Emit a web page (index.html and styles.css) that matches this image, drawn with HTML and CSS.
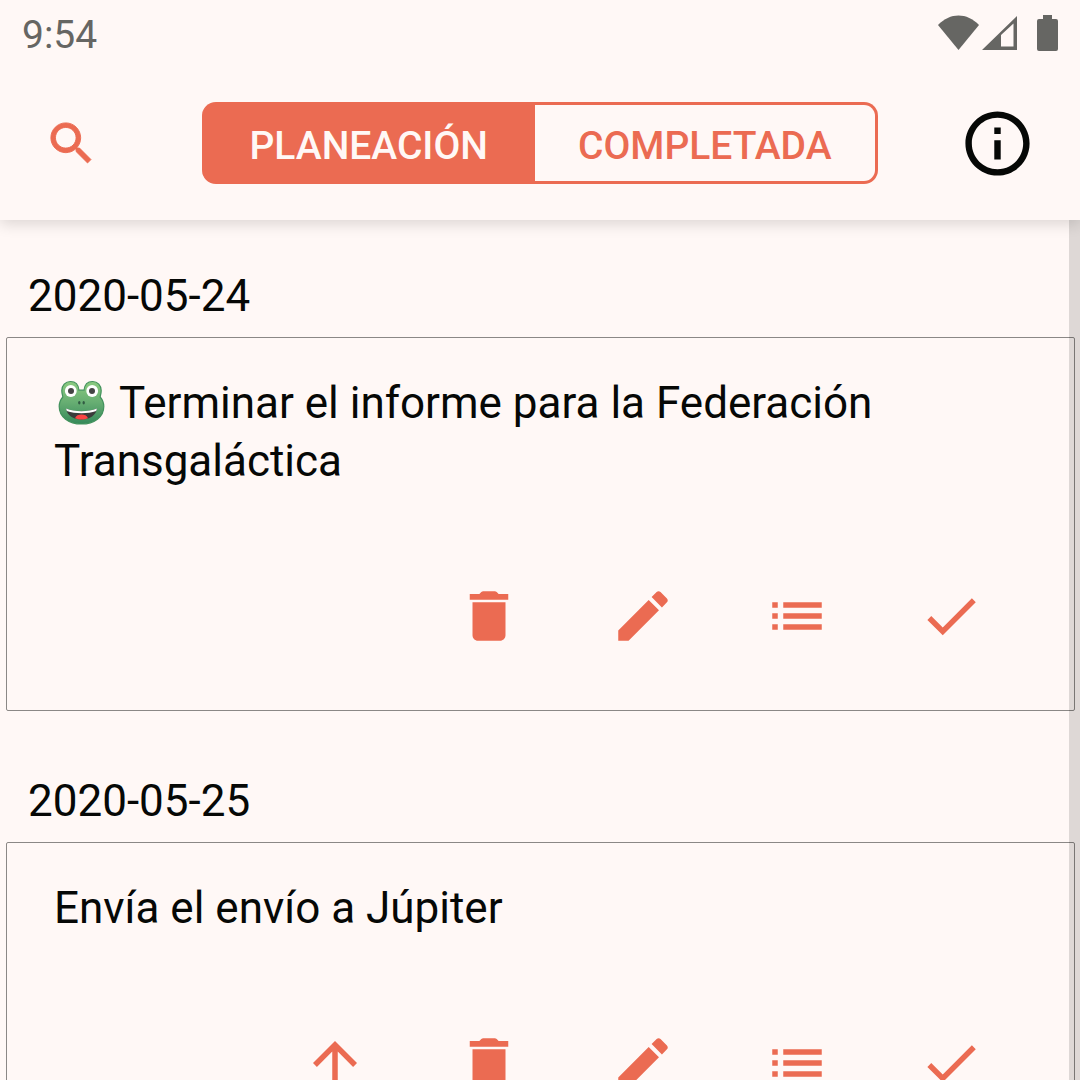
FILE: index.html
```html
<!DOCTYPE html>
<html lang="es">
<head>
<meta charset="utf-8">
<meta name="viewport" content="width=device-width, initial-scale=1">
<title>Planeación</title>
<link rel="stylesheet" href="styles.css">
</head>
<body>
<svg class="sprite" aria-hidden="true">
  <symbol id="trash" viewBox="0 0 24 24"><path d="M6 19c0 1.1.9 2 2 2h8c1.1 0 2-.9 2-2V7H6v12zM19 4h-3.500l-.7-.7c-.2-.2-.45-.3-.7-.3H9.900c-.25 0-.5.1-.7.3l-.7.7H5v2.100h14V4z"/></symbol>
  <symbol id="pencil" viewBox="0 0 24 24"><path d="M3 17.250V21h3.750L17.810 9.940l-3.750-3.750L3 17.250zM20.710 7.040c.39-.39.39-1.020 0-1.410l-2.340-2.340c-.39-.39-1.020-.39-1.410 0l-1.830 1.830 3.750 3.750 1.830-1.830z"/></symbol>
  <symbol id="list" viewBox="0 0 24 24"><path d="M3 13h2v-2H3v2zm0 4h2v-2H3v2zm0-8h2V7H3v2zm4 4h14v-2H7v2zm0 4h14v-2H7v2zM7 7v2h14V7H7z"/></symbol>
  <symbol id="check" viewBox="0 0 24 24"><path d="M9 16.170L4.830 12l-1.420 1.410L9 19 21 7l-1.410-1.410z"/></symbol>
  <symbol id="up" viewBox="0 0 24 24"><path d="M4 12l1.410 1.410L11 7.830V20h2V7.830l5.580 5.590L20 12l-8-8-8 8z"/></symbol>
</svg>
<div class="app">
  <header class="header">
    <div class="status">
      <time class="clock">9:54</time>
      <div class="indicators">
        <svg class="wifi" viewBox="0 0 41 36" aria-hidden="true"><path d="M0 10C12-2.800 29-2.800 41 10L20.500 35z"/></svg>
        <svg class="signal" viewBox="0 0 35 36" aria-hidden="true"><path fill-rule="evenodd" d="M0 35L35 1v34zM19 20v11.500h12.500V8.500z"/></svg>
        <svg class="battery" viewBox="0 0 21 36" aria-hidden="true"><path d="M6 0h9v4h4q2 0 2 2v28q0 2-2 2H2q-2 0-2-2V6q0-2 2-2h4z"/></svg>
      </div>
    </div>
    <div class="toolbar">
      <button class="tool search" type="button" aria-label="Buscar"><svg viewBox="0 0 24 24"><path d="M15.500 14h-.79l-.28-.27C15.410 12.590 16 11.110 16 9.500 16 5.910 13.090 3 9.500 3S3 5.910 3 9.500 5.910 16 9.500 16c1.610 0 3.090-.59 4.230-1.570l.27.28v.79l5 4.990L20.490 19l-4.990-5zm-6 0C7.010 14 5 11.990 5 9.500S7.010 5 9.500 5 14 7.010 14 9.500 11.990 14 9.500 14z" stroke="currentColor" stroke-width=".4"/></svg></button>
      <div class="segments">
        <button class="segment active" type="button" aria-pressed="true">PLANEACIÓN</button>
        <button class="segment" type="button" aria-pressed="false">COMPLETADA</button>
      </div>
      <button class="tool info" type="button" aria-label="Información"><svg viewBox="0 0 24 24"><path d="M11 17h2v-6h-2v6zm1-15C6.480 2 2 6.480 2 12s4.480 10 10 10 10-4.480 10-10S17.520 2 12 2zm0 18c-4.410 0-8-3.590-8-8s3.590-8 8-8 8 3.590 8 8-3.590 8-8 8zM11 9h2V7h-2v2z"/></svg></button>
    </div>
  </header>
  <div class="content">
    <main class="list">
      <section class="day">
        <h2 class="date">2020-05-24</h2>
        <article class="card">
          <p class="title"><svg class="frog" viewBox="0 0 55 46" role="img" aria-label="Rana">
            <defs><linearGradient id="skin" x1="0" y1="0" x2="0" y2="1"><stop offset="0" stop-color="#8ccb80"/><stop offset=".5" stop-color="#66ad72"/><stop offset="1" stop-color="#35895a"/></linearGradient></defs>
            <path fill="url(#skin)" stroke="#43925d" stroke-width="1.200" d="M16.500 1.500c5 0 8 3.500 8.500 8.700h5c.5-5.200 3.500-8.700 8.500-8.700 5.200 0 8.700 4 8.700 9 0 2.500-.7 4.500-1 6.500 2.500 3 3.600 6 3.600 9.500 0 10.500-9.500 17.500-22.300 17.500S5.200 37 5.200 26.500c0-3.500 1.100-6.500 3.600-9.500-.3-2-1-4-1-6.500 0-5 3.500-9 8.700-9z"/>
            <circle cx="16.800" cy="11" r="5.900" fill="#fff"/><circle cx="38.200" cy="11" r="5.900" fill="#fff"/>
            <circle cx="17" cy="11" r="3" fill="#444"/><circle cx="38" cy="11" r="3" fill="#444"/>
            <ellipse cx="25.300" cy="22.800" rx="1.200" ry="1.800" fill="#315b43"/><ellipse cx="29.700" cy="22.800" rx="1.200" ry="1.800" fill="#315b43"/>
            <path fill="#3b3b3b" d="M12 28.500c9 3.500 22 3.500 31 0-.8 6.500-7 11-15.500 11S12.800 35 12 28.500z"/>
            <path fill="#fff" d="M12 28.500c9 3.500 22 3.500 31 0l-.8 2.600c-8.500 3-20.900 3-29.400 0z"/>
            <path fill="#fa4545" d="M21 38.200c1-2.700 3.500-3.700 6.500-3.700s5.500 1 6.500 3.700c-3.800 1.800-9.200 1.800-13 0z"/>
          </svg> Terminar el informe para la Federación Transgaláctica</p>
          <div class="actions">
            <button class="action" type="button" aria-label="Eliminar"><svg><use href="#trash"/></svg></button>
            <button class="action" type="button" aria-label="Editar"><svg><use href="#pencil"/></svg></button>
            <button class="action" type="button" aria-label="Lista"><svg><use href="#list"/></svg></button>
            <button class="action" type="button" aria-label="Completar"><svg><use href="#check"/></svg></button>
          </div>
        </article>
      </section>
      <section class="day">
        <h2 class="date">2020-05-25</h2>
        <article class="card">
          <p class="title">Envía el envío a Júpiter</p>
          <div class="actions">
            <button class="action" type="button" aria-label="Subir"><svg><use href="#up"/></svg></button>
            <button class="action" type="button" aria-label="Eliminar"><svg><use href="#trash"/></svg></button>
            <button class="action" type="button" aria-label="Editar"><svg><use href="#pencil"/></svg></button>
            <button class="action" type="button" aria-label="Lista"><svg><use href="#list"/></svg></button>
            <button class="action" type="button" aria-label="Completar"><svg><use href="#check"/></svg></button>
          </div>
        </article>
      </section>
    </main>
    <div class="scrollbar"></div>
  </div>
</div>
</body>
</html>
```
FILE: styles.css
```css
* {
  box-sizing: border-box;
}

body {
  margin: 0;
  background: #fff8f6;
  color: #060806;
  font-family: Roboto, sans-serif;
}

button {
  margin: 0;
  padding: 0;
  border: 0;
  background: none;
  color: inherit;
  font: inherit;
}

svg {
  display: block;
  fill: currentColor;
}

.sprite {
  display: none;
}

.app {
  display: flex;
  flex-direction: column;
  height: 100vh;
}

.header {
  z-index: 1;
  padding-bottom: 36px;
  background: #fff8f6;
  box-shadow: 0 4px 14px rgba(0, 0, 0, 0.14);
}

.status {
  display: flex;
  justify-content: space-between;
  align-items: flex-start;
  height: 66px;
  padding: 12px 22px 0;
  color: #666663;
}

.clock {
  font-size: 39px;
  line-height: 46px;
}

.indicators {
  display: flex;
  height: 36px;
  margin-top: 3px;
}

.wifi {
  width: 41px;
}

.signal {
  width: 35px;
  margin: 0 20px 0 3px;
}

.battery {
  width: 21px;
}

.toolbar {
  display: flex;
  justify-content: space-between;
  align-items: center;
  padding: 36px 44px 0;
}

.tool {
  display: flex;
  align-items: center;
  width: 77px;
}

.search {
  color: #eb6b52;
}

.search svg {
  width: 55px;
  height: 55px;
}

.info svg {
  width: 77px;
  height: 77px;
}

.segments {
  display: flex;
}

.segment {
  height: 82px;
  padding: 6px 43px 0;
  border: 3px solid #eb6b52;
  border-left: 0;
  border-radius: 0 14px 14px 0;
  color: #eb6b52;
  font-size: 39px;
  font-weight: 500;
  line-height: 46px;
}

.active {
  padding: 6px 47px 0;
  border-width: 3px 0;
  border-radius: 14px 0 0 14px;
  background: #eb6b52;
  color: #fff8f6;
}

.content {
  position: relative;
  flex: 1;
  min-height: 0;
}

.list {
  height: 100%;
  overflow-y: auto;
  padding: 47px 5px 0 6px;
  scrollbar-width: none;
}

.day {
  margin-bottom: 61px;
}

.date {
  margin: 0 0 12px;
  padding-left: 22px;
  font-size: 44px;
  font-weight: 400;
  line-height: 58px;
}

.card {
  padding: 36px 46px 27px 47px;
  border: 1px solid #8b8886;
  border-radius: 2px;
}

.title {
  margin: 0 0 59px;
  font-size: 44px;
  line-height: 58px;
}

.frog {
  display: inline-block;
  width: 55px;
  height: 46px;
  vertical-align: -8px;
}

.actions {
  display: flex;
  justify-content: flex-end;
  color: #eb6b52;
}

.action {
  display: flex;
  justify-content: center;
  align-items: center;
  width: 154px;
  height: 134px;
}

.action svg {
  width: 66px;
  height: 66px;
}

.scrollbar {
  position: absolute;
  top: 0;
  right: 0;
  bottom: 0;
  width: 11px;
  background: rgba(0, 0, 0, 0.13);
}
```
